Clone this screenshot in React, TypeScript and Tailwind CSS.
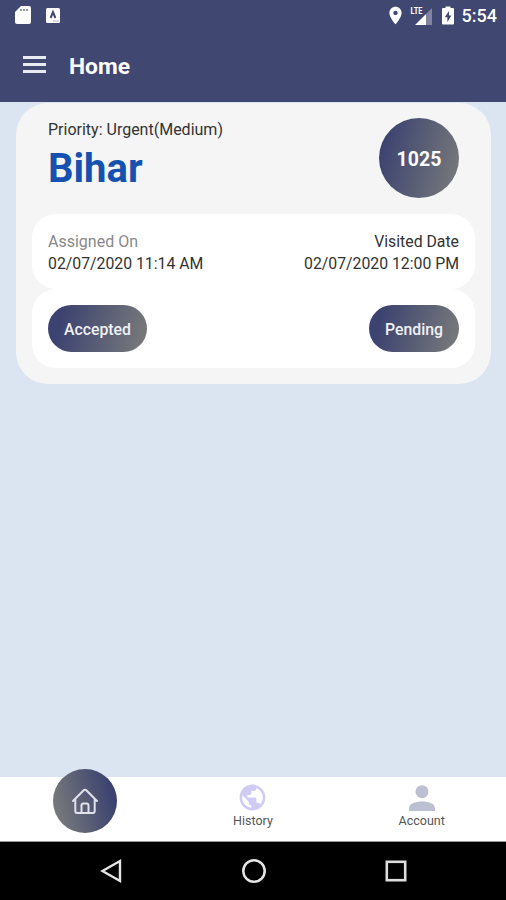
import type { ReactNode } from 'react'
import { MdPublic, MdLocationOn } from 'react-icons/md'

const task = {
  id: '1025',
  priority: 'Urgent(Medium)',
  place: 'Bihar',
  assignedOn: '02/07/2020 11:14 AM',
  visitedDate: '02/07/2020 12:00 PM',
}

function StatusBar() {
  return (
    <div className="flex h-8 items-center justify-between pl-[15px] pr-[9px] text-white">
      <div className="flex items-center gap-[15px]">
        <svg className="-mt-[2px]" width="16" height="20" viewBox="0 0 16 20" fill="white">
          <path d="M6 1h8a2 2 0 0 1 2 2v14a2 2 0 0 1-2 2H2a2 2 0 0 1-2-2V7z" />
          <path d="M6 4v2M9 4v2M12 4v2" stroke="#737895" strokeWidth="1.5" />
        </svg>
        <svg className="-mt-[2px]" width="14" height="17" viewBox="0 0 14 17">
          <rect y="1" width="14" height="15" rx="1.5" fill="white" />
          <path d="M4.6 11 7 5.2 9.4 11" fill="none" stroke="#404770" strokeWidth="2" />
          <path d="M7 14h6" stroke="#b6b9cb" />
        </svg>
      </div>
      <div className="flex items-center">
        <MdLocationOn className="-mt-[2px]" size={21} />
        <svg className="-mt-[2px] ml-[4px]" width="24" height="22" viewBox="0 0 24 22">
          <path d="M22 4v17h-6v-11z" fill="#8084a1" />
          <path d="M16 10v11H5z" fill="white" />
          <text x="0.5" y="9.5" fill="white" fontSize="9.5" fontWeight="700" textLength="12" lengthAdjust="spacingAndGlyphs">
            LTE
          </text>
        </svg>
        <svg className="-mt-[2px] ml-[8px]" width="12" height="19" viewBox="0 0 12 19" fill="white">
          <path d="M3.5 2V.5h5V2H11a1 1 0 0 1 1 1v14.5a1 1 0 0 1-1 1H1a1 1 0 0 1-1-1V3a1 1 0 0 1 1-1z" />
          <path d="M7 5 2.8 11.2h2.6V16l4-6.4H7z" fill="#404770" />
        </svg>
        <span className="ml-[8px] text-[18px] font-medium leading-8">5:54</span>
      </div>
    </div>
  )
}

function Header() {
  return (
    <header className="h-[102px] shrink-0 bg-[#404770]">
      <StatusBar />
      <div className="flex h-[66px] items-center pl-[23px] text-white">
        <button aria-label="Menu" className="-mt-px flex flex-col gap-[4px]">
          <span className="h-[3px] w-[23px] bg-[#e8eaf2]" />
          <span className="h-[3px] w-[23px] bg-[#e8eaf2]" />
          <span className="h-[3px] w-[23px] bg-[#e8eaf2]" />
        </button>
        <h1 className="ml-[23px] pt-1 text-[22.8px] font-bold">Home</h1>
      </div>
    </header>
  )
}

function Pill({ children }: { children: ReactNode }) {
  return (
    <button className="h-[47px] rounded-full bg-linear-[105deg,#3c4370_15%,#74767a_90%] px-4 pt-[2px] text-[15.8px] font-medium text-[#f0f1f5]">
      {children}
    </button>
  )
}

function TaskCard() {
  return (
    <section className="ml-4 mr-[15px] mt-px h-[281px] rounded-[32px] bg-[#f5f5f5] px-4 pt-[15px]">
      <div className="flex h-24 justify-between px-4">
        <div>
          <p className="pt-[2px] text-[16px] leading-[20px] text-[#333]">Priority: {task.priority}</p>
          <h2 className="mt-[6px] text-[40px] font-bold leading-[46px] text-[#1552b0]">{task.place}</h2>
        </div>
        <div className="flex size-20 items-center justify-center rounded-full bg-linear-[105deg,#3c4370_10%,#74767a_90%] pt-[3px] text-[19.5px] font-bold text-white">
          {task.id}
        </div>
      </div>
      <div className="flex h-[75px] justify-between rounded-3xl bg-white px-4 pt-[17px] text-[15.8px] leading-[22px] text-[#333]">
        <div>
          <p className="text-[16px] text-[#888]">Assigned On</p>
          <p>{task.assignedOn}</p>
        </div>
        <div className="text-right">
          <p>Visited Date</p>
          <p>{task.visitedDate}</p>
        </div>
      </div>
      <div className="flex h-[79px] items-center justify-between rounded-3xl bg-white px-4">
        <Pill>Accepted</Pill>
        <Pill>Pending</Pill>
      </div>
    </section>
  )
}

function TabBar() {
  return (
    <nav className="grid h-[65px] shrink-0 grid-cols-3 border-b border-[#999] bg-white text-[12.5px] leading-4 text-[#555]">
      <div className="-mt-2 flex justify-center pl-px">
        <button
          aria-label="Home"
          className="flex size-16 items-center justify-center rounded-full bg-linear-[75deg,#74767a_15%,#3c4370_85%]"
        >
          <svg width="28" height="28" viewBox="0 0 28 28" fill="none" stroke="#e1e2ec" strokeWidth="2" strokeLinecap="round" strokeLinejoin="round">
            <path d="M2 14 12.7 3.3a1.8 1.8 0 0 1 2.6 0L26 14M4.3 12v12a2 2 0 0 0 2 2h15.4a2 2 0 0 0 2-2V12" />
            <path d="M10.5 26v-7.5a2 2 0 0 1 2-2h3a2 2 0 0 1 2 2V26" />
          </svg>
        </button>
      </div>
      <div className="flex flex-col items-center pt-[5px]">
        <MdPublic size={31} color="#cfcbf5" />
        <span>History</span>
      </div>
      <div className="flex flex-col items-center pt-[8px]">
        <svg width="26" height="28" viewBox="0 0 26 28" fill="#bdbfd2">
          <circle cx="13" cy="6.7" r="6.5" />
          <path d="M0 26v-2.5C0 18.5 6 16.5 13 16.5s13 2 13 7V26z" />
        </svg>
        <span>Account</span>
      </div>
    </nav>
  )
}

function SystemNav() {
  return (
    <div className="grid h-[58px] shrink-0 grid-cols-3 place-items-center bg-black pl-[41px] pr-[39px]">
      <svg width="24" height="26" viewBox="0 0 24 26" fill="none" stroke="#e5e5e5" strokeWidth="2.4">
        <path d="M20 3v20L2.500 13z" />
      </svg>
      <svg width="26" height="26" viewBox="0 0 26 26" fill="none" stroke="#e5e5e5" strokeWidth="2.5">
        <circle cx="13" cy="13" r="10.7" />
      </svg>
      <svg width="22" height="22" viewBox="0 0 22 22" fill="none" stroke="#ddd" strokeWidth="2.6">
        <rect x="1.8" y="1.8" width="18.4" height="18.4" />
      </svg>
    </div>
  )
}

export default function App() {
  return (
    <div className="flex h-[900px] w-[506px] flex-col overflow-hidden bg-[#dbe5f1] font-[Roboto,sans-serif]">
      <Header />
      <main className="flex-1">
        <TaskCard />
      </main>
      <TabBar />
      <SystemNav />
    </div>
  )
}
